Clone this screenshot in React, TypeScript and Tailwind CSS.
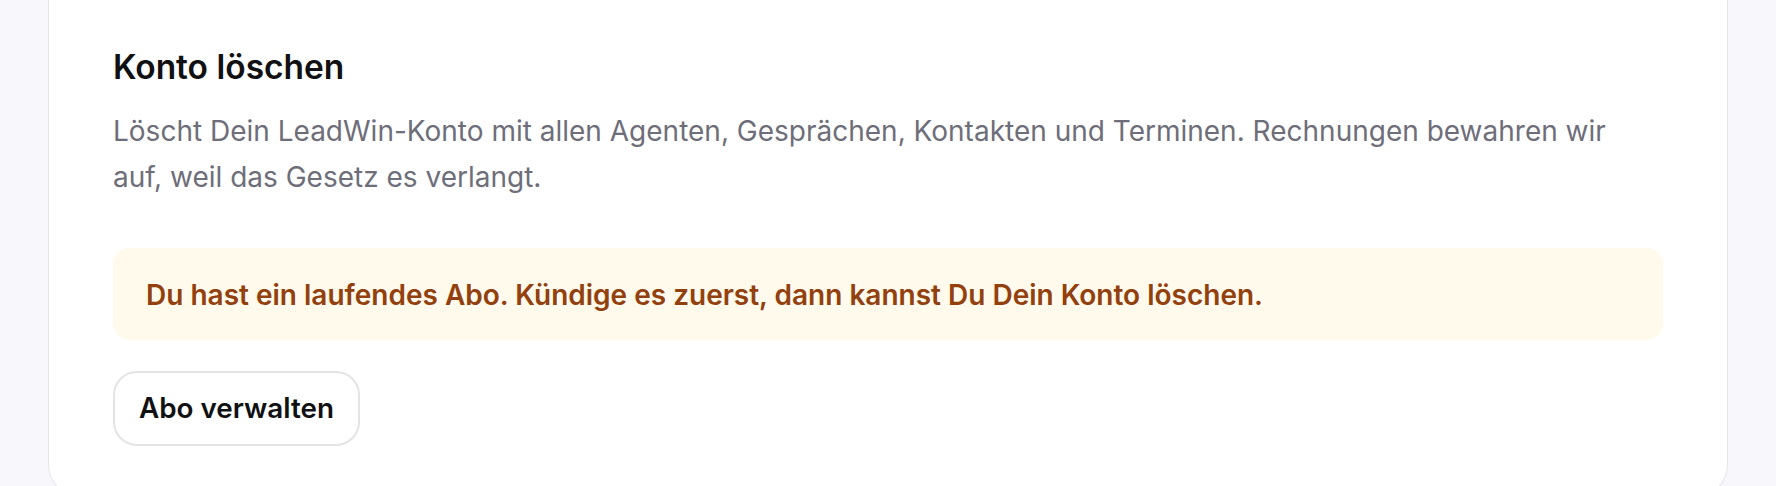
export default function App() {
  return (
    <div className="h-[486px] overflow-hidden bg-[#f8f8fc] px-12 font-['Inter',sans-serif]">
      <section className="rounded-b-[32px] border-x border-b border-[#e4e4ea] bg-white px-16 pt-[46px] pb-[50px]">
        <h2 className="text-[33.5px] leading-[43px] font-semibold text-[#111113]">Konto löschen</h2>
        <p className="mt-[19px] max-w-[1520px] text-[28px] leading-[46px] text-[#6e6e7a]">
          Löscht Dein LeadWin-Konto mit allen Agenten, Gesprächen, Kontakten und Terminen. Rechnungen bewahren wir auf, weil das Gesetz es verlangt.
        </p>

        <div className="mt-[48px] rounded-2xl bg-[#fffaeb] px-[33px] pt-[26px] pb-[24px]">
          <p className="text-[28px] leading-[42px] font-semibold text-[#92400e]">
            Du hast ein laufendes Abo. Kündige es zuerst, dann kannst Du Dein Konto löschen.
          </p>
        </div>

        <button className="mt-[31px] flex h-[75px] items-center rounded-3xl border-2 border-[#e4e4e7] bg-white px-[24px] text-[27.8px] font-semibold text-[#111113]">
          Abo verwalten
        </button>
      </section>
    </div>
  )
}
